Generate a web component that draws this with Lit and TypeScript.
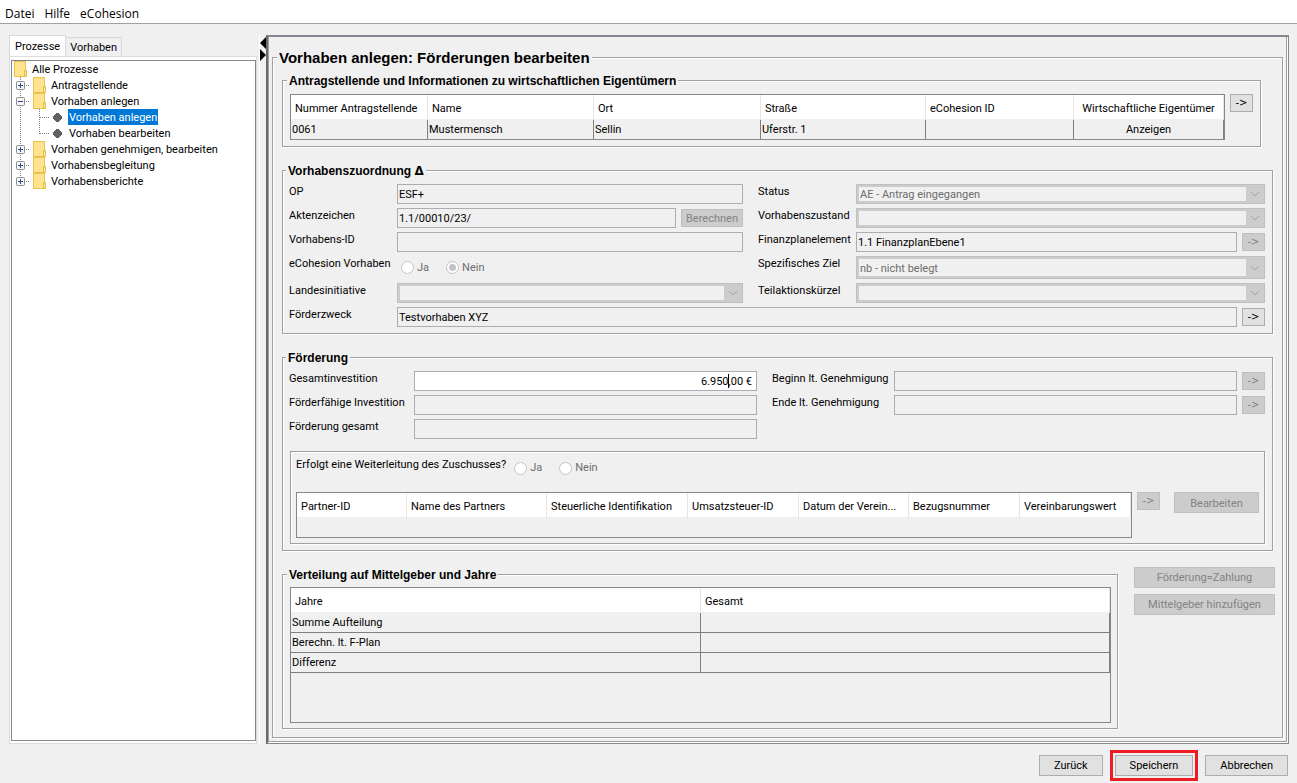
import { LitElement, html, css, svg, nothing } from "lit";
import { customElement, property } from "lit/decorators.js";
import { classMap } from "lit/directives/class-map.js";

type Column = { label: string; width: number; center?: boolean };

const applicantColumns: Column[] = [
  { label: "Nummer Antragstellende", width: 137 },
  { label: "Name", width: 166 },
  { label: "Ort", width: 167 },
  { label: "Straße", width: 165 },
  { label: "eCohesion ID", width: 148 },
  { label: "Wirtschaftliche Eigentümer", width: 150, center: true },
];

const partnerColumns: Column[] = [
  { label: "Partner-ID", width: 110 },
  { label: "Name des Partners", width: 140 },
  { label: "Steuerliche Identifikation", width: 141 },
  { label: "Umsatzsteuer-ID", width: 111 },
  { label: "Datum der Verein...", width: 110 },
  { label: "Bezugsnummer", width: 111 },
  { label: "Vereinbarungswert", width: 111 },
];

const fundingColumns: Column[] = [
  { label: "Jahre", width: 410 },
  { label: "Gesamt", width: 409 },
];

@customElement("data-grid")
export class DataGrid extends LitElement {
  @property({ attribute: false }) columns: Column[] = [];
  @property({ attribute: false }) rows: string[][] = [];
  @property() label = "";

  static styles = css`
    :host {
      display: block;
      border: 1px solid #828790;
      background: #f0f0f0;
      overflow: hidden;
    }
    table {
      width: 100%;
      table-layout: fixed;
      border-collapse: separate;
      border-spacing: 0;
    }
    th,
    td {
      box-sizing: border-box;
      text-align: left;
      font-weight: normal;
      line-height: 14px;
      white-space: nowrap;
      overflow: hidden;
      text-overflow: ellipsis;
    }
    th {
      height: 25px;
      padding: 4px 4px 0;
      background: #fff;
      border-right: 1px solid #e5e5e5;
      border-bottom: 1px solid #f0f0f0;
    }
    td {
      height: 20px;
      padding: 1px 1px 0;
      border-right: 1px solid #808080;
      border-bottom: 1px solid #808080;
    }
    .single td {
      height: 19px;
      border-bottom: 0;
    }
    .center {
      text-align: center;
    }
  `;

  render() {
    const total = this.columns.reduce((sum, c) => sum + c.width, 0);
    return html`<table
      class=${classMap({ single: this.rows.length < 2 })}
      aria-label=${this.label}
    >
      <colgroup>
        ${this.columns.map(
          (c) => html`<col style="width:${((c.width / total) * 100).toFixed(3)}%" />`
        )}
      </colgroup>
      <thead>
        <tr>
          ${this.columns.map(
            (c) => html`<th scope="col" class=${c.center ? "center" : ""}>${c.label}</th>`
          )}
        </tr>
      </thead>
      <tbody>
        ${this.rows.map(
          (r) => html`<tr>
            ${r.map(
              (v, i) => html`<td class=${this.columns[i].center ? "center" : ""}>${v}</td>`
            )}
          </tr>`
        )}
      </tbody>
    </table>`;
  }
}

type Node = {
  label: string;
  level: 0 | 1 | 2;
  open?: boolean;
  last?: boolean;
  selected?: boolean;
};

const nodes: Node[] = [
  { label: "Alle Prozesse", level: 0 },
  { label: "Antragstellende", level: 1 },
  { label: "Vorhaben anlegen", level: 1, open: true },
  { label: "Vorhaben anlegen", level: 2, selected: true },
  { label: "Vorhaben bearbeiten", level: 2, last: true },
  { label: "Vorhaben genehmigen, bearbeiten", level: 1 },
  { label: "Vorhabensbegleitung", level: 1 },
  { label: "Vorhabensberichte", level: 1, last: true },
];

@customElement("process-tree")
export class ProcessTree extends LitElement {
  static styles = css`
    :host {
      display: block;
      background: #fff;
      border: 1px solid #828790;
    }
    ul {
      list-style: none;
      margin: 0;
      padding: 0;
    }
    li {
      display: flex;
      height: 16px;
      white-space: nowrap;
    }
    svg {
      display: block;
      flex: none;
    }
    .text {
      padding: 0 1px;
      line-height: 18px;
    }
    .selected {
      background: #0078d7;
      color: #fff;
    }
    .dots {
      stroke: #808080;
      stroke-dasharray: 1 1;
      fill: none;
    }
  `;

  private folder(x: number) {
    return svg`
      <rect x=${x + 0.5} y="0.5" width="11" height="15" fill="#ffe38f" stroke="#e8c350"></rect>
      <path d="M${x + 10.5} 15.5v-6h2v6z" fill="#ffe9a6" stroke="#e3bb3f"></path>`;
  }

  private gutter(n: Node) {
    if (n.level === 0) {
      return html`<svg width="19" height="16" viewBox="0 0 19 16" aria-hidden="true">
        ${this.folder(2)}
      </svg>`;
    }
    if (n.level === 1) {
      return html`<svg width="38" height="16" viewBox="0 0 38 16" aria-hidden="true">
        <path class="dots" d=${n.last ? "M8.5 0V8" : "M8.5 0V16"} />
        <path class="dots" d="M14 8.5H18" />
        <rect x="4.5" y="4.5" width="8" height="8" rx="1" fill="#f6f6f6" stroke="#8c8c8c" />
        <path
          d=${n.open ? "M6 8.5h5" : "M6 8.5h5M8.5 6v5"}
          stroke="#2d4a9a"
          fill="none"
        />
        ${this.folder(21)}
      </svg>`;
    }
    return html`<svg width="56" height="16" viewBox="0 0 56 16" aria-hidden="true">
      <path class="dots" d="M8.5 0V16" />
      <path class="dots" d=${n.last ? "M27.5 0V9" : "M27.5 0V16"} />
      <path class="dots" d="M28 8.5H37" />
      <path
        d="M43 5h1v-1h3v1h1v1h1v1h1v3h-1v1h-1v1h-1v1h-3v-1h-1v-1h-1v-1h-1v-3h1v-1h1z"
        fill="#606060"
      />
    </svg>`;
  }

  render() {
    return html`<ul role="tree" aria-label="Prozesse">
      ${nodes.map(
        (n) => html`<li
          role="treeitem"
          aria-level=${n.level + 1}
          aria-selected=${n.selected ? "true" : "false"}
          aria-expanded=${n.open ? "true" : nothing}
        >
          ${this.gutter(n)}<span class=${classMap({ text: true, selected: !!n.selected })}
            >${n.label}</span
          >
        </li>`
      )}
    </ul>`;
  }
}

@customElement("app-root")
export class AppRoot extends LitElement {
  static styles = css`
    :host {
      display: flex;
      flex-direction: column;
      box-sizing: border-box;
      min-height: 100vh;
      background: #f0f0f0;
      color: #000;
      font: 11px/16px Roboto, "Noto Sans", sans-serif;
    }
    *,
    *::before,
    *::after {
      box-sizing: border-box;
    }
    .menu {
      display: flex;
      gap: 10px;
      height: 24px;
      padding: 5px 5px 0;
      background: #fff;
      border-bottom: 1px solid #a0a0a0;
      font: 12px/18px "Open Sans", "Noto Sans", sans-serif;
    }
    .menu a {
      color: inherit;
      text-decoration: none;
    }
    .main {
      display: flex;
      flex: 1;
      padding: 11px 8px 0 9px;
    }
    .side {
      display: flex;
      flex-direction: column;
      flex: none;
      width: 248px;
    }
    .tabs {
      display: flex;
      align-items: flex-end;
      height: 21px;
    }
    .tab {
      height: 19px;
      margin: 0;
      padding: 2px 4px 0;
      border: 1px solid #d9d9d9;
      border-left: 0;
      border-bottom: 0;
      background: #f0f0f0;
      color: inherit;
      font: inherit;
      line-height: 14px;
    }
    .tab.active {
      height: 21px;
      padding: 1px 5px 0;
      border-left: 1px solid #d9d9d9;
      background: #fff;
    }
    .pane {
      display: flex;
      flex: 1;
      padding: 3px 0 2px 1px;
      border: 1px solid #dcdcdc;
      background: #fff;
    }
    process-tree {
      flex: 1;
    }
    .splitter {
      flex: none;
      width: 7px;
      margin-left: 2px;
      border-left: 1px solid #fff;
    }
    .splitter svg {
      display: block;
    }
    .panel {
      display: flex;
      flex: 1;
      min-width: 0;
      border: 1px solid #828790;
      border-left: 2px solid #696970;
      border-top: 2px solid #85858f;
    }
    .inner {
      display: flex;
      flex: 1;
      min-width: 0;
      padding: 11px 3px 3px 3px;
      border: 1px solid #a0a0a0;
      border-top: 0;
      margin: 0 1px 1px 0;
      box-shadow: 1px 1px 0 #fff;
    }
    fieldset {
      min-width: 0;
      margin: 0;
      border: 1px solid #a0a0a0;
      box-shadow: 1px 1px 0 #fff, inset 1px 1px 0 #fff;
    }
    legend {
      height: 15px;
      padding: 0 2px;
      margin-left: -3px;
      background: #f0f0f0;
      font: bold 12px/16px "Liberation Sans", Arial, sans-serif;
    }
    .delta {
      font-family: "DejaVu Sans", sans-serif;
      font-weight: bold;
    }
    .page {
      display: flex;
      flex-direction: column;
      gap: 16px;
      flex: 1;
      padding: 6px 9px 8px;
    }
    .page > legend {
      height: 19px;
      margin-left: -5px;
      font-size: 15px;
      line-height: 20px;
    }
    .section {
      padding: 6px 7px 6px 6px;
    }
    .applicants {
      display: flex;
      align-items: flex-start;
      gap: 5px;
      margin-right: 12px;
      padding-left: 7px;
    }
    .applicants data-grid,
    .partners data-grid {
      flex: 1;
      min-width: 0;
    }
    .form {
      display: grid;
      gap: 4px 0;
    }
    .assignment {
      grid-template-columns: 108px minmax(0, 346fr) 15px 98px minmax(0, 409fr);
      grid-template-rows: 20px 20px 20px 23px 20px 20px;
    }
    .funding {
      grid-template-columns: 125px minmax(0, 343fr) 15px 122px minmax(0, 371fr);
      grid-auto-rows: 20px;
    }
    .right {
      grid-column: 4;
    }
    .wide {
      grid-column: 2 / -1;
    }
    .field {
      display: flex;
      align-items: center;
      gap: 5px;
      min-width: 0;
    }
    input[type="text"] {
      flex: 1;
      min-width: 0;
      width: 100%;
      height: 100%;
      padding: 1px 1px 0;
      border: 1px solid #abadb3;
      border-radius: 0;
      outline: 0;
      background: #f0f0f0;
      color: #000;
      font: inherit;
    }
    .amount {
      position: relative;
    }
    .amount input[type="text"] {
      padding-right: 4px;
      background: #fff;
      text-align: right;
    }
    .caret {
      position: absolute;
      right: 28px;
      top: 3px;
      width: 1px;
      height: 14px;
      background: #000;
    }
    button {
      flex: none;
      height: 18px;
      padding: 2px 3px 0;
      border: 1px solid #adadad;
      border-radius: 0;
      background: #e1e1e1;
      color: #000;
      font: inherit;
      line-height: 14px;
    }
    button:disabled {
      border-color: #bfbfbf;
      background: #ccc;
      color: #838383;
    }
    .arrow {
      width: 23px;
      padding: 0;
      font-family: "DejaVu Sans", sans-serif;
      font-size: 10px;
    }
    .calc {
      width: 62px;
    }
    .tall {
      height: 21px;
    }
    .combo {
      display: flex;
      height: 100%;
      padding: 2px 0 2px 2px;
      border: 1px solid #bfbfbf;
      background: #ccc;
    }
    .combo select {
      flex: 1;
      min-width: 0;
      padding: 2px 1px 0;
      border: 0;
      border-radius: 0;
      appearance: none;
      background: #f0f0f0;
      color: #6d6d6d;
      opacity: 1;
      font: inherit;
      line-height: 12px;
    }
    .combo svg {
      flex: none;
      align-self: center;
    }
    .radios {
      display: flex;
      gap: 17px;
      align-items: center;
      color: #6d6d6d;
    }
    .radios label {
      display: flex;
      align-items: center;
      gap: 3px;
    }
    .form .radios {
      padding-left: 4px;
    }
    input[type="radio"] {
      appearance: none;
      width: 13px;
      height: 13px;
      margin: 0;
      border: 1px solid #c3c3c3;
      border-radius: 50%;
      background: #fff;
    }
    input[type="radio"]:checked {
      background: radial-gradient(circle, #c3c3c3 3px, #fff 4px);
    }
    .forwarding {
      margin: 12px 0 0 1px;
      padding: 5px 5px 5px;
      border: 1px solid #a0a0a0;
      box-shadow: 1px 1px 0 #fff, inset 1px 1px 0 #fff;
    }
    .question {
      display: flex;
      align-items: flex-start;
      gap: 8px;
      height: 35px;
    }
    .question .radios {
      height: 22px;
    }
    .partners {
      display: flex;
      align-items: flex-start;
      gap: 5px;
    }
    .partners data-grid {
      height: 46px;
    }
    .edit {
      width: 85px;
      margin-left: 9px;
    }
    .bottom {
      display: flex;
      flex: 1;
      gap: 16px;
      margin-right: -2px;
    }
    .years {
      display: flex;
      flex: 1;
      padding: 5px 6px 5px 7px;
    }
    .years data-grid {
      flex: 1;
      min-height: 90px;
    }
    .actions {
      display: flex;
      flex-direction: column;
      gap: 6px;
      width: 141px;
    }
    .actions button {
      padding-top: 0;
    }
    .footer {
      display: flex;
      justify-content: flex-end;
      align-items: center;
      gap: 7px;
      padding: 6px 9px 2px;
    }
    .footer button {
      min-width: 63px;
      padding: 1px 14px 0;
    }
    .save {
      display: flex;
      padding: 2px;
      border: 3px solid #ed1c24;
    }
  `;

  private text(id: string, label: string, value = "", after: unknown = nothing, right = false) {
    return html`<label for=${id} class=${right ? "right" : ""}>${label}</label>
      <div class="field"><input type="text" id=${id} .value=${value} readonly />${after}</div>`;
  }

  private combo(id: string, label: string, value = "", right = true) {
    return html`<label for=${id} class=${right ? "right" : ""}>${label}</label>
      <div class="combo">
        <select id=${id} disabled>
          <option>${value}</option>
        </select>
        <svg width="18" height="12" viewBox="0 0 18 12" aria-hidden="true">
          <path d="M5 4l4 4 4-4" fill="none" stroke="#a3a3a3" />
        </svg>
      </div>`;
  }

  private arrow(label: string, disabled = true) {
    return html`<button class="arrow" aria-label=${label} ?disabled=${disabled}>-&gt;</button>`;
  }

  private radios(name: string, label: string, checked = "") {
    return html`<div class="radios" role="radiogroup" aria-label=${label}>
      ${["Ja", "Nein"].map(
        (v) => html`<label
          ><input type="radio" name=${name} ?checked=${v === checked} disabled />${v}</label
        >`
      )}
    </div>`;
  }

  render() {
    return html`
      <nav class="menu">
        <a href="#datei">Datei</a><a href="#hilfe">Hilfe</a><a href="#ecohesion">eCohesion</a>
      </nav>
      <div class="main">
        <aside class="side">
          <div class="tabs" role="tablist">
            <button class="tab active" role="tab" aria-selected="true">Prozesse</button>
            <button class="tab" role="tab" aria-selected="false">Vorhaben</button>
          </div>
          <div class="pane"><process-tree></process-tree></div>
        </aside>
        <div class="splitter">
          <svg width="6" height="28" viewBox="0 0 6 28" aria-hidden="true">
            <path d="M6 2v12L0 8zM0 14v12l6-6z" fill="#000" />
          </svg>
        </div>
        <main class="panel">
          <div class="inner">
            <fieldset class="page">
              <legend>Vorhaben anlegen: Förderungen bearbeiten</legend>

              <fieldset class="section applicants">
                <legend>Antragstellende und Informationen zu wirtschaftlichen Eigentümern</legend>
                <data-grid
                  label="Antragstellende"
                  .columns=${applicantColumns}
                  .rows=${[["0061", "Mustermensch", "Sellin", "Uferstr. 1", "", "Anzeigen"]]}
                ></data-grid>
                ${this.arrow("Antragstellende öffnen", false)}
              </fieldset>

              <fieldset class="section">
                <legend>Vorhabenszuordnung <span class="delta">Δ</span></legend>
                <div class="form assignment">
                  ${this.text("op", "OP", "ESF+")}
                  ${this.combo("status", "Status", "AE - Antrag eingegangen")}
                  ${this.text(
                    "akz",
                    "Aktenzeichen",
                    "1.1/00010/23/",
                    html`<button class="calc" disabled>Berechnen</button>`
                  )}
                  ${this.combo("zustand", "Vorhabenszustand")}
                  ${this.text("vid", "Vorhabens-ID")}
                  ${this.text(
                    "fpe",
                    "Finanzplanelement",
                    "1.1 FinanzplanEbene1",
                    this.arrow("Finanzplanelement wählen"),
                    true
                  )}
                  <span>eCohesion Vorhaben</span>
                  ${this.radios("ecohesion", "eCohesion Vorhaben", "Nein")}
                  ${this.combo("ziel", "Spezifisches Ziel", "nb - nicht belegt")}
                  ${this.combo("land", "Landesinitiative", "", false)}
                  ${this.combo("teil", "Teilaktionskürzel")}
                  <label for="zweck">Förderzweck</label>
                  <div class="field wide">
                    <input type="text" id="zweck" .value=${"Testvorhaben XYZ"} />
                    ${this.arrow("Förderzweck öffnen", false)}
                  </div>
                </div>
              </fieldset>

              <fieldset class="section">
                <legend>Förderung</legend>
                <div class="form funding">
                  <label for="invest">Gesamtinvestition</label>
                  <div class="field amount">
                    <input type="text" id="invest" .value=${"6.950,00 €"} />
                    <span class="caret"></span>
                  </div>
                  ${this.text("beginn", "Beginn lt. Genehmigung", "", this.arrow("Beginn wählen"), true)}
                  ${this.text("ffi", "Förderfähige Investition")}
                  ${this.text("ende", "Ende lt. Genehmigung", "", this.arrow("Ende wählen"), true)}
                  ${this.text("fges", "Förderung gesamt")}
                </div>
                <div class="forwarding">
                  <div class="question">
                    <span>Erfolgt eine Weiterleitung des Zuschusses?</span>
                    ${this.radios("forward", "Weiterleitung des Zuschusses")}
                  </div>
                  <div class="partners">
                    <data-grid label="Partner" .columns=${partnerColumns}></data-grid>
                    ${this.arrow("Partner öffnen")}
                    <button class="tall edit" disabled>Bearbeiten</button>
                  </div>
                </div>
              </fieldset>

              <div class="bottom">
                <fieldset class="section years">
                  <legend>Verteilung auf Mittelgeber und Jahre</legend>
                  <data-grid
                    label="Verteilung"
                    .columns=${fundingColumns}
                    .rows=${[
                      ["Summe Aufteilung", ""],
                      ["Berechn. lt. F-Plan", ""],
                      ["Differenz", ""],
                    ]}
                  ></data-grid>
                </fieldset>
                <div class="actions">
                  <button class="tall" disabled>Förderung=Zahlung</button>
                  <button class="tall" disabled>Mittelgeber hinzufügen</button>
                </div>
              </div>
            </fieldset>
          </div>
        </main>
      </div>
      <footer class="footer">
        <button class="tall">Zurück</button>
        <div class="save"><button class="tall">Speichern</button></div>
        <button class="tall">Abbrechen</button>
      </footer>
    `;
  }
}
